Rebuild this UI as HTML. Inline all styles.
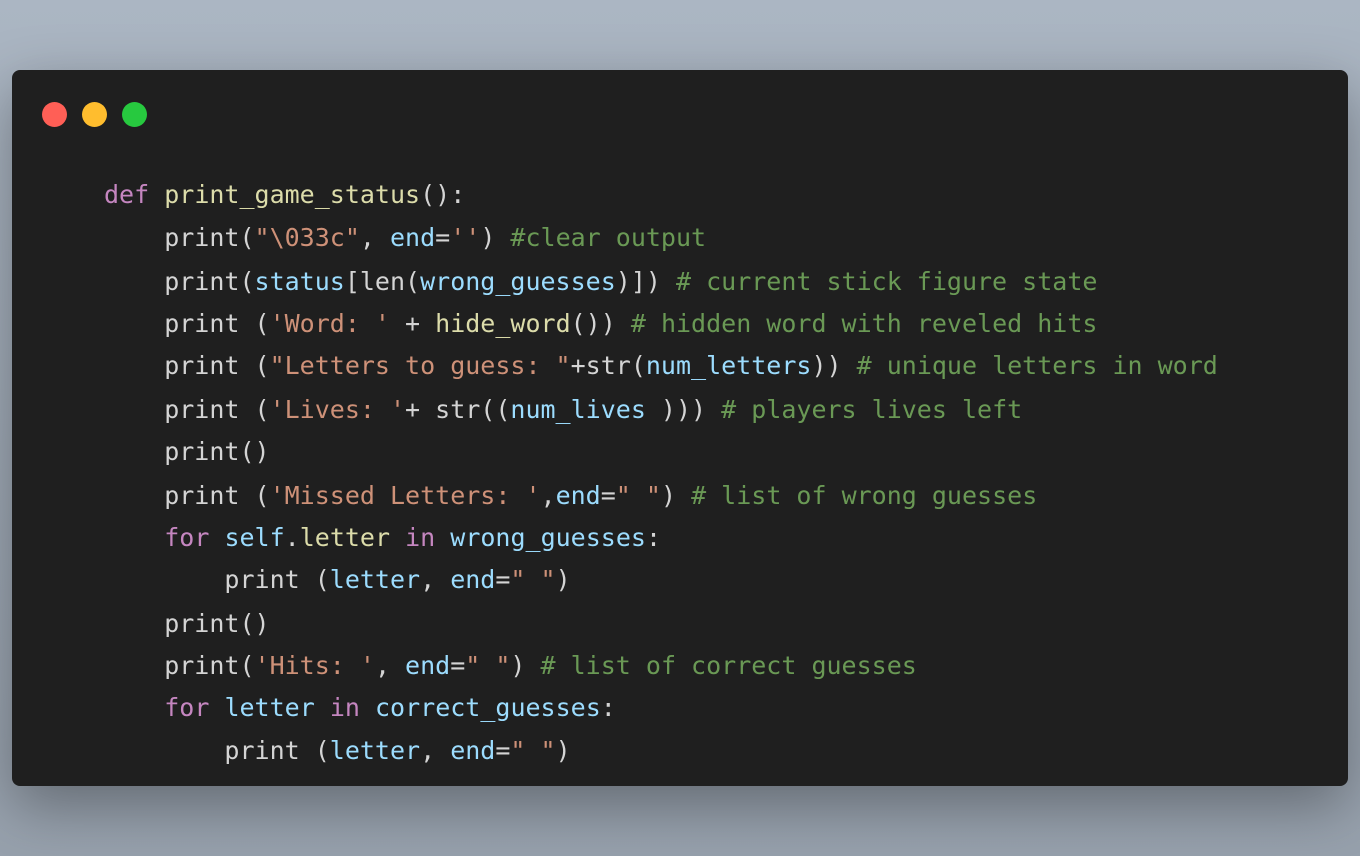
<!DOCTYPE html>
<html><head><style>
html,body{margin:0;width:1360px;height:856px;overflow:hidden}
body{background:linear-gradient(#abb6c3,#97a1ad);position:relative;font-family:"DejaVu Sans Mono","Liberation Mono",monospace}
.win{position:absolute;left:12px;top:70px;width:1336px;height:716px;background:#1f1f1f;border-radius:8px;box-shadow:0 20px 60px rgba(0,0,0,.35)}
.d{position:absolute;top:102px;width:25px;height:25px;border-radius:50%}
.l{position:absolute;left:104px;font-size:25px;line-height:36px;color:#d4d4d4;white-space:pre}
.k{color:#c586c0}.f{color:#dcdcaa}.s{color:#ce9178}.v{color:#9cdcfe}.c{color:#6a9955}
</style></head><body>
<div class="win"></div>
<div class="d" style="left:42px;background:#ff5f56"></div>
<div class="d" style="left:82px;background:#ffbd2e"></div>
<div class="d" style="left:122px;background:#27c93f"></div>
<div class="l" style="top:177px"><span class="k">def</span> <span class="f">print_game_status</span>():</div>
<div class="l" style="top:220px">    print(<span class="s">"\033c"</span>, <span class="v">end</span>=<span class="s">''</span>) <span class="c">#clear output</span></div>
<div class="l" style="top:264px">    print(<span class="v">status</span>[len(<span class="v">wrong_guesses</span>)]) <span class="c"># current stick figure state</span></div>
<div class="l" style="top:306px">    print (<span class="s">'Word: '</span> + <span class="f">hide_word</span>()) <span class="c"># hidden word with reveled hits</span></div>
<div class="l" style="top:348px">    print (<span class="s">"Letters to guess: "</span>+str(<span class="v">num_letters</span>)) <span class="c"># unique letters in word</span></div>
<div class="l" style="top:392px">    print (<span class="s">'Lives: '</span>+ str((<span class="v">num_lives</span> ))) <span class="c"># players lives left</span></div>
<div class="l" style="top:434px">    print()</div>
<div class="l" style="top:478px">    print (<span class="s">'Missed Letters: '</span>,<span class="v">end</span>=<span class="s">" "</span>) <span class="c"># list of wrong guesses</span></div>
<div class="l" style="top:520px">    <span class="k">for</span> <span class="v">self</span>.<span class="f">letter</span> <span class="k">in</span> <span class="v">wrong_guesses</span>:</div>
<div class="l" style="top:562px">        print (<span class="v">letter</span>, <span class="v">end</span>=<span class="s">" "</span>)</div>
<div class="l" style="top:606px">    print()</div>
<div class="l" style="top:648px">    print(<span class="s">'Hits: '</span>, <span class="v">end</span>=<span class="s">" "</span>) <span class="c"># list of correct guesses</span></div>
<div class="l" style="top:690px">    <span class="k">for</span> <span class="v">letter</span> <span class="k">in</span> <span class="v">correct_guesses</span>:</div>
<div class="l" style="top:733px">        print (<span class="v">letter</span>, <span class="v">end</span>=<span class="s">" "</span>)</div>
</body></html>
